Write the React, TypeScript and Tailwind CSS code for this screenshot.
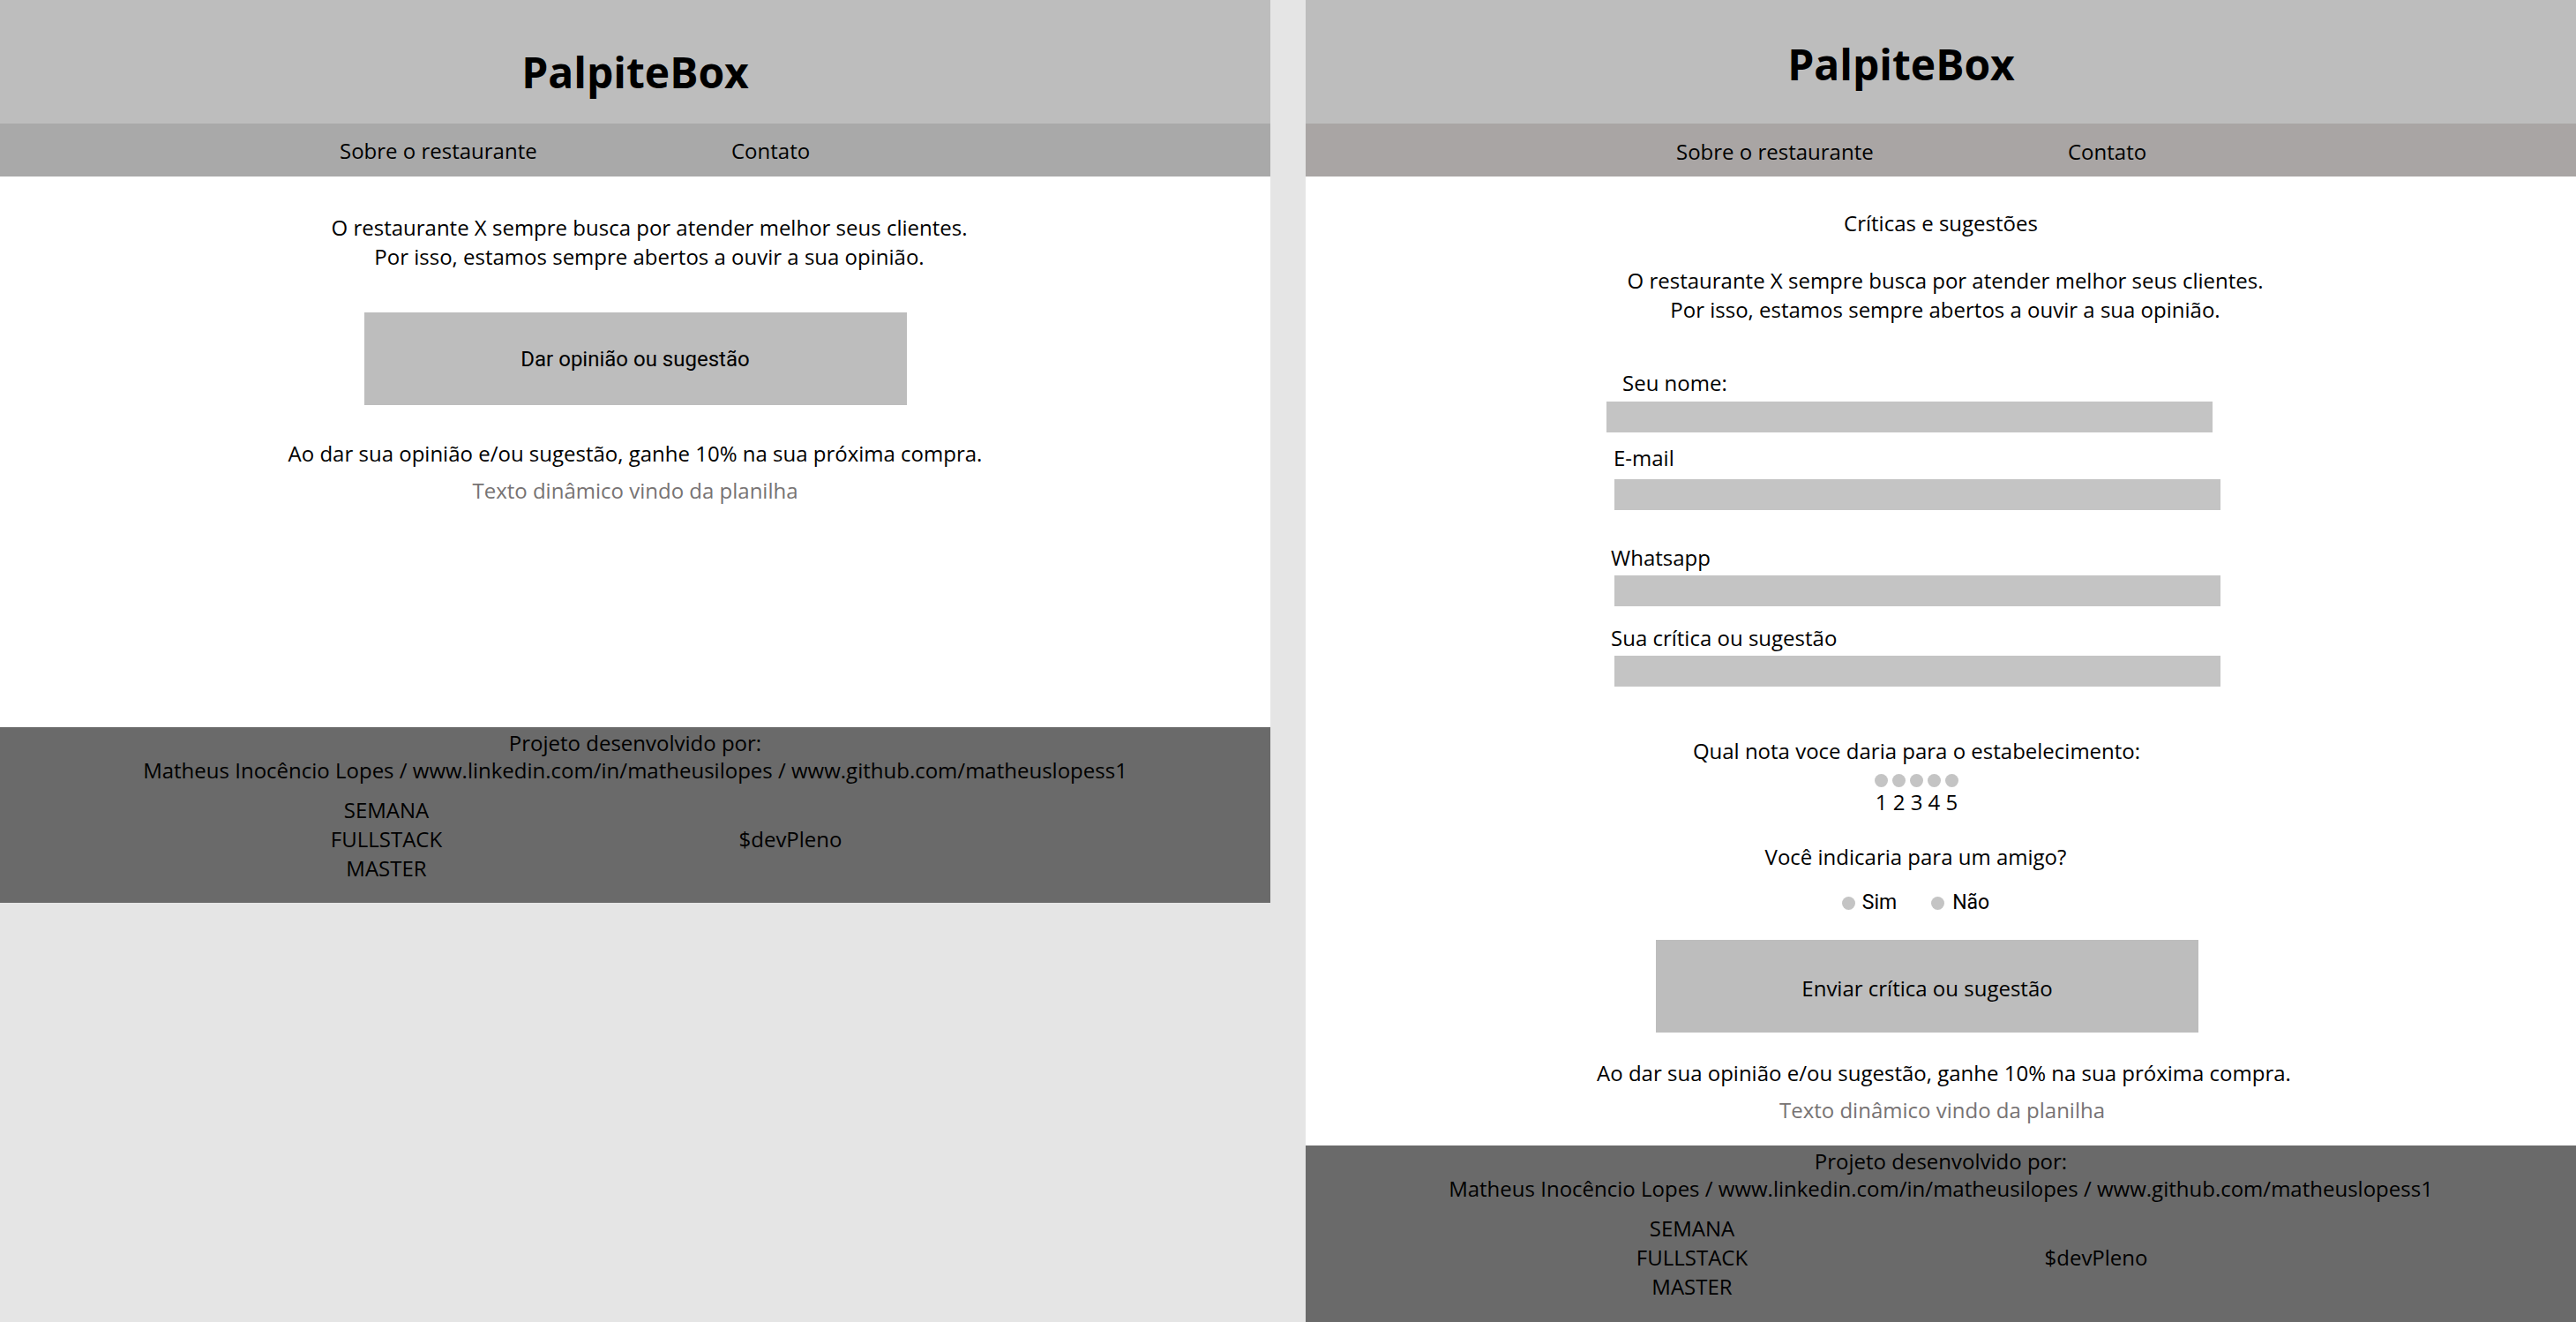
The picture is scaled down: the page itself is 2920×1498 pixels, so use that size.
import React from "react";

function Footer({ h }: { h: string }) {
  return (
    <footer className={h}>
      <p className="text-center leading-[32px]">Projeto desenvolvido por:</p>
      <p className="text-center leading-[29px]">
        Matheus Inocêncio Lopes / www.linkedin.com/in/matheusilopes / www.github.com/matheuslopess1
      </p>
      <div className="mt-[14px] flex items-center">
        <div className="ml-[338px] w-[200px] text-center">
          <p>SEMANA</p>
          <p>FULLSTACK</p>
          <p>MASTER</p>
        </div>
        <div className="ml-[258px] w-[200px] text-center">$devPleno</div>
      </div>
    </footer>
  );
}

function LeftFrame() {
  return (
    <div className="w-[1440px] shrink-0 flex flex-col bg-white">
      <header className="h-[140px] bg-[#bdbdbd] pt-[49px] text-center">
        <h1 className="text-[48px] leading-[65px] font-bold">PalpiteBox</h1>
      </header>
      <nav className="h-[60px] bg-[#a9a9a9] flex items-center pl-[385px]">
        <span className="w-[444px]">Sobre o restaurante</span>
        <span>Contato</span>
      </nav>
      <main className="h-[624px] flex flex-col">
        <div className="mt-[41px] pl-[32px] text-center">
          <p>O restaurante X sempre busca por atender melhor seus clientes.</p>
          <p>Por isso, estamos sempre abertos a ouvir a sua opinião.</p>
        </div>
        <button className="mt-[47px] mx-auto w-[615px] h-[105px] bg-[#bdbdbd] flex items-center justify-center font-['Roboto',sans-serif] text-[24px] leading-[28px] text-black">
          Dar opinião ou sugestão
        </button>
        <p className="mt-[38px] text-center">
          Ao dar sua opinião e/ou sugestão, ganhe 10% na sua próxima compra.
        </p>
        <p className="mt-[9px] text-center text-[#777373]">Texto dinâmico vindo da planilha</p>
      </main>
      <Footer h="h-[199px] bg-[#6a6a6a] pt-[2px] flex flex-col" />
    </div>
  );
}

function Dot({ extra }: { extra: string }) {
  return <span className={extra} />;
}

function RightFrame() {
  return (
    <div className="w-[1440px] shrink-0 flex flex-col bg-white">
      <header className="h-[140px] bg-[#bdbdbd] pt-[40px] pr-[90px] text-center">
        <h1 className="text-[48px] leading-[65px] font-bold">PalpiteBox</h1>
      </header>
      <nav className="h-[60px] bg-[#a9a5a4] pt-[2px] flex items-center pl-[420px]">
        <span className="w-[444px]">Sobre o restaurante</span>
        <span>Contato</span>
      </nav>
      <main className="flex flex-col">
        <p className="mt-[36px] text-center">Críticas e sugestões</p>
        <div className="mt-[32px] pl-[10px] text-center">
          <p>O restaurante X sempre busca por atender melhor seus clientes.</p>
          <p>Por isso, estamos sempre abertos a ouvir a sua opinião.</p>
        </div>
        <form className="flex flex-col">
          <label className="mt-[50px] pl-[359px]">Seu nome:</label>
          <div className="mt-[5px] ml-[341px] w-[687px] h-[35px] bg-[#c4c4c4]" />
          <label className="mt-[12px] pl-[349px]">E-mail</label>
          <div className="mt-[8px] ml-[350px] w-[687px] h-[35px] bg-[#c4c4c4]" />
          <label className="mt-[37px] pl-[346px]">Whatsapp</label>
          <div className="mt-[4px] ml-[350px] w-[687px] h-[35px] bg-[#c4c4c4]" />
          <label className="mt-[19px] pl-[346px]">Sua crítica ou sugestão</label>
          <div className="mt-[4px] ml-[350px] w-[687px] h-[35px] bg-[#c4c4c4]" />
        </form>
        <p className="mt-[56px] pr-[55px] text-center">Qual nota voce daria para o estabelecimento:</p>
        <div className="mt-[10px] pr-[56px] flex justify-center gap-[5px]">
          <Dot extra="w-[15px] h-[15px] rounded-full bg-[#c4c4c4]" />
          <Dot extra="w-[15px] h-[15px] rounded-full bg-[#c4c4c4]" />
          <Dot extra="w-[15px] h-[15px] rounded-full bg-[#c4c4c4]" />
          <Dot extra="w-[15px] h-[15px] rounded-full bg-[#c4c4c4]" />
          <Dot extra="w-[15px] h-[15px] rounded-full bg-[#c4c4c4]" />
        </div>
        <p className="pr-[55px] text-center">1 2 3 4 5</p>
        <p className="mt-[29px] pr-[57px] text-center">Você indicaria para um amigo?</p>
        <div className="mt-[23px] pr-[57px] flex items-center justify-center font-['Roboto',sans-serif] text-[23px] leading-[26px]">
          <Dot extra="w-[15px] h-[15px] rounded-full bg-[#c4c4c4]" />
          <span className="ml-[8px]">Sim</span>
          <Dot extra="ml-[39px] w-[15px] h-[15px] rounded-full bg-[#c4c4c4]" />
          <span className="ml-[9px]">Não</span>
        </div>
        <button className="mt-[29px] ml-[397px] w-[615px] h-[105px] bg-[#bdbdbd] pt-[4px] flex items-center justify-center text-[24px] leading-[33px] text-black">
          Enviar crítica ou sugestão
        </button>
        <p className="mt-[29px] pl-[7px] text-center">
          Ao dar sua opinião e/ou sugestão, ganhe 10% na sua próxima compra.
        </p>
        <p className="mt-[9px] pl-[3px] text-center text-[#777373]">Texto dinâmico vindo da planilha</p>
      </main>
      <div className="mt-[24px]">
        <Footer h="h-[200px] bg-[#6a6a6a] pt-[2px] flex flex-col" />
      </div>
    </div>
  );
}

export default function App() {
  return (
    <div className="w-[2920px] h-[1498px] overflow-hidden bg-[#e5e5e5] flex items-start gap-[40px] font-['Open_Sans',sans-serif] text-[24px] leading-[33px] text-black">
      <LeftFrame />
      <RightFrame />
    </div>
  );
}
